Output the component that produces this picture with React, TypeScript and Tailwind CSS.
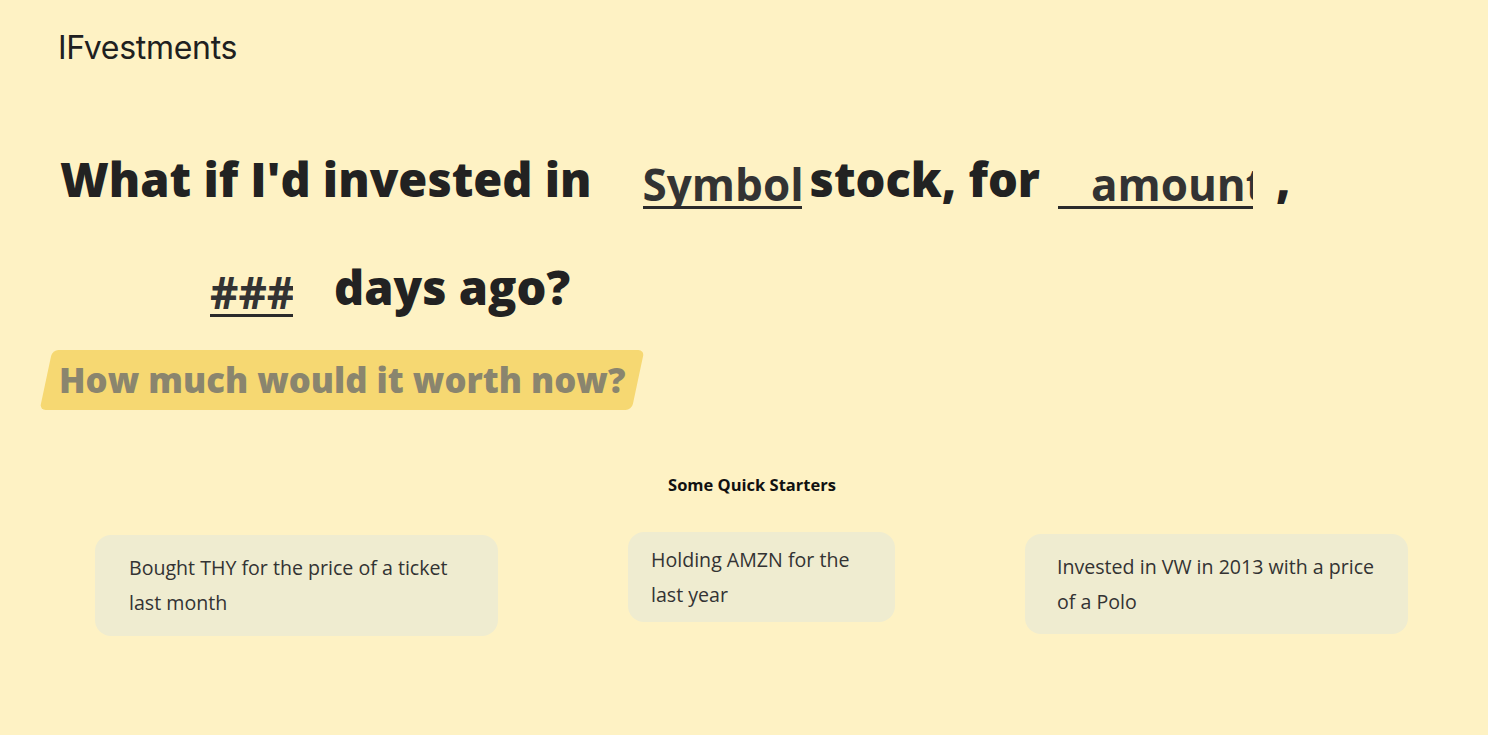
import { useState } from 'react';

const starters = [
  { text: 'Bought THY for the price of a ticket last month', cls: 'mt-[3px] w-[403px] h-[101px] px-[34px] pt-[15px]' },
  { text: 'Holding AMZN for the last year', cls: 'w-[267px] h-[90px] px-[23px] pt-[10px]' },
  { text: 'Invested in VW in 2013 with a price of a Polo', cls: 'mt-[2px] w-[383px] h-[100px] px-[32px] pt-[15px]' },
];

export default function App() {
  const [symbol, setSymbol] = useState('');
  const [amount, setAmount] = useState('');
  const [days, setDays] = useState('');

  const inputCls =
    'bg-transparent border-b-[3px] border-[#2b2b2b] text-[#333] placeholder:text-[#333] outline-none font-bold h-[48px] mb-[24px] text-[44px] leading-none';

  return (
    <div className="min-h-[735px] w-full bg-[#fef2c4] font-['Open_Sans',sans-serif] text-[#222]">
      <header className="px-[58px] pt-[28px]">
        <div className="font-['Inter',sans-serif] text-[32px] leading-[40px] tracking-[-0.3px] text-[#202020]">IFvestments</div>
      </header>

      <main className="px-[60px] pt-[57px]">
        <h1 className="text-[47px] font-extrabold leading-[108px]">
          <div className="flex items-end">
            <span>What if I'd invested in</span>
            <input
              value={symbol}
              onChange={(e) => setSymbol(e.target.value)}
              placeholder="Symbol"
              className={`${inputCls} ml-[51px] w-[159px]`}
            />
            <span className="ml-[8px]">stock, for</span>
            <input
              value={amount}
              onChange={(e) => setAmount(e.target.value)}
              placeholder="amount"
              className={`${inputCls} ml-[18px] w-[195px] pl-[33px]`}
            />
            <span className="ml-[23px]">,</span>
          </div>
          <div className="flex items-end pl-[150px]">
            <input
              value={days}
              onChange={(e) => setDays(e.target.value)}
              placeholder="###"
              className={`${inputCls} w-[83px]`}
            />
            <span className="ml-[41px]">days ago?</span>
          </div>
        </h1>

        <div className="mt-[9px] ml-[-14px] inline-block -skew-x-[12deg] rounded-[6px] bg-[#f6d872] px-[13px] py-[5px]">
          <div className="skew-x-[12deg] text-[34.7px] font-extrabold leading-[50px] text-[#8a856e]">
            How much would it worth now?
          </div>
        </div>
      </main>

      <section className="pt-[63px]">
        <h2 className="pl-[16px] text-center text-[16.5px] font-bold leading-[24px] text-[#111]">Some Quick Starters</h2>
        <div className="mt-[35px] flex items-start gap-[130px] pl-[95px]">
          {starters.map((s) => (
            <button
              key={s.text}
              type="button"
              className={`${s.cls} flex items-start rounded-[16px] bg-[#efecd0] text-left text-[19.6px] leading-[35px] text-[#333]`}
            >
              <span>{s.text}</span>
            </button>
          ))}
        </div>
      </section>
    </div>
  );
}
